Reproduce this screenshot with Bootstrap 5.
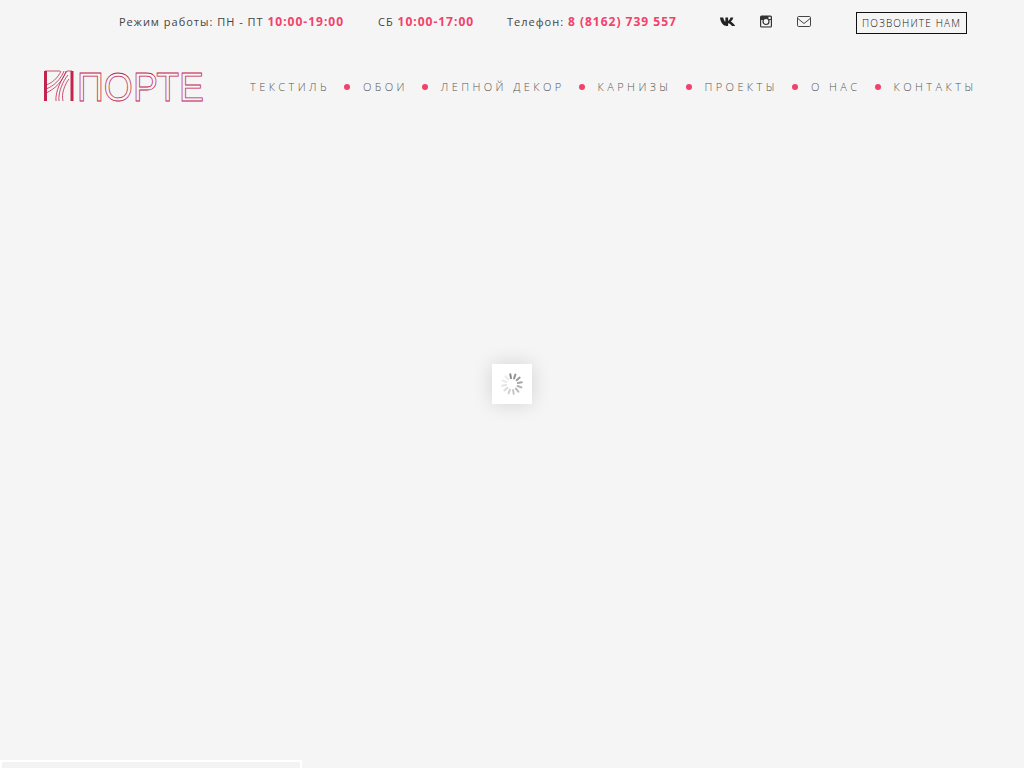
<!DOCTYPE html>
<html lang="en">
<head>
  <meta charset="UTF-8" />
  <meta name="viewport" content="width=device-width, initial-scale=1" />
  <title>Порте</title>
  <link href="https://cdn.jsdelivr.net/npm/bootstrap@5.3.0/dist/css/bootstrap.min.css" rel="stylesheet" />
  <style>
    html, body { height: 100%; }
    body {
      background: #f5f5f5;
      font-family: "Open Sans", "Liberation Sans", sans-serif;
      overflow: hidden;
    }
    .top-strip {
      height: 46px;
      padding-left: 119px;
      padding-top: 13px;
      color: #444;
      font-size: 11px;
      line-height: 18px;
      letter-spacing: 1px;
    }
    .top-strip b {
      color: #f2416b;
      font-size: 12px;
      font-weight: 700;
    }
    .hours-a { width: 259px; }
    .hours-b { width: 129px; }
    .phone-box { width: 213px; }
    .social-box { width: 136px; gap: 22px; margin-top: 1px; }
    .call-btn {
      width: 111px;
      height: 22px;
      margin-top: -1px;
      border: 1px solid #111;
      border-radius: 0;
      padding: 0;
      font-size: 10px;
      font-weight: 300;
      line-height: 21px;
      letter-spacing: 1.15px;
      color: #111;
      background: transparent;
    }
    .logo-row { padding-left: 43px; height: 60px; padding-top: 24px; }
    .logo-mark { width: 161px; height: 32px; display: block; overflow: visible; flex: none; }
    .logo-word {
      font-family: "Liberation Sans", sans-serif;
      font-size: 41px;
      fill: none;
      stroke: #c2244f;
      stroke-width: .8;
    }
    .main-menu { margin-left: 46px; margin-top: 9px; }
    .main-menu a {
      color: #555;
      font-size: 11px;
      font-weight: 300;
      letter-spacing: 3.4px;
      text-decoration: none;
      white-space: nowrap;
    }
    .menu-dot {
      width: 6px;
      height: 6px;
      border-radius: 50%;
      background: #f2416b;
      margin: 0 13px 0 14px;
      flex: none;
    }
    .loader-box {
      position: fixed;
      left: 492px;
      top: 364px;
      width: 40px;
      height: 40px;
      background: #fff;
      box-shadow: 0 0 20px rgba(0, 0, 0, .14);
    }
    .bottom-frame {
      position: fixed;
      left: 0;
      bottom: -12px;
      width: 302px;
      height: 20px;
      border: 2px solid #fff;
      background: #f3f3f3;
    }
  </style>
</head>
<body>

<div class="top-strip d-flex align-items-start">
  <div class="hours-a text-nowrap">Режим работы: ПН - ПТ <b>10:00-19:00</b></div>
  <div class="hours-b text-nowrap">СБ <b>10:00-17:00</b></div>
  <div class="phone-box text-nowrap">Телефон: <b>8 (8162) 739 557</b></div>
  <div class="social-box d-flex">
    <svg width="16" height="16" viewBox="0 0 16 16"><path fill="#222" d="M0 3.500h3.200c.4 2 1.400 3.800 2.200 4.200V3.500h2.700v3.300c.8-.2 1.900-1.700 2.400-3.300H13.300c-.4 1.800-1.500 3.300-2.500 4.100 1.200.8 3.300 2.300 4.400 4.400h-3.300c-.8-1.500-2.200-2.600-3.800-2.800V12H7C3.300 12 .6 8.800 0 3.500z"/></svg>
    <svg width="16" height="16" viewBox="0 0 16 16"><rect x="2" y="1.500" width="12" height="12" rx="1.500" fill="#333"/><rect x="3.200" y="6" width="9.600" height="6.400" fill="#f5f5f5"/><circle cx="8" cy="7.500" r="3" fill="#f5f5f5" stroke="#333" stroke-width="1.200"/><rect x="10.500" y="2.800" width="2.200" height="2.200" fill="#f5f5f5"/></svg>
    <svg width="16" height="16" viewBox="0 0 16 16" fill="none" stroke="#444" stroke-width="1"><rect x="1.500" y="2.500" width="13" height="10" rx="1.200"/><path d="M1.800 4.500 8 9.500l6.200-5"/></svg>
  </div>
  <button class="btn call-btn text-nowrap" type="button">ПОЗВОНИТЕ НАМ</button>
</div>

<div class="logo-row d-flex align-items-start">
  <svg class="logo-mark" viewBox="0 0 161 32">
    <g fill="none" stroke="#c2244f" stroke-width=".8">
      <path d="M2 1h15"/>
      <path d="M3 15C9 13 15 8 18 1M3 19C11 16 18 9 21 1M3 23C12 19 20 11 23 1"/>
      <path stroke-width="3" d="M2.500 1v30"/>
      <path d="M13 31C12 22 18 10 24 1h5M16 31C15 22 20 11 25 5M20 31C18 24 22 14 26 9"/>
      <path stroke-width="3" d="M29 1v30"/>
    </g>
    <text class="logo-word" x="34" y="30.500" textLength="127" lengthAdjust="spacingAndGlyphs">ПОРТЕ</text>
  </svg>
  <nav class="main-menu d-flex align-items-center">
    <a href="#">ТЕКСТИЛЬ</a><span class="menu-dot"></span>
    <a href="#">ОБОИ</a><span class="menu-dot"></span>
    <a href="#">ЛЕПНОЙ ДЕКОР</a><span class="menu-dot"></span>
    <a href="#">КАРНИЗЫ</a><span class="menu-dot"></span>
    <a href="#">ПРОЕКТЫ</a><span class="menu-dot"></span>
    <a href="#">О НАС</a><span class="menu-dot"></span>
    <a href="#">КОНТАКТЫ</a>
  </nav>
</div>

<div class="loader-box d-flex align-items-center justify-content-center">
  <svg id="spinner" width="24" height="24" viewBox="0 0 24 24"></svg>
</div>

<div class="bottom-frame"></div>

<script>
  // 12 spokes, darkest at the top, fading clockwise
  const spinner = document.getElementById("spinner");
  let spokes = "";
  for (let i = 0; i < 12; i++) {
    const op = Math.max(0.12, 0.7 - i * 0.06);
    spokes += `<rect x="11" y="1" width="2" height="6" rx="1" fill="#555" opacity="${op}" transform="rotate(${i * 30 - 10} 12 12)"/>`;
  }
  spinner.innerHTML = spokes;
</script>
<script src="https://cdn.jsdelivr.net/npm/bootstrap@5.3.0/dist/js/bootstrap.bundle.min.js"></script>
</body>
</html>
